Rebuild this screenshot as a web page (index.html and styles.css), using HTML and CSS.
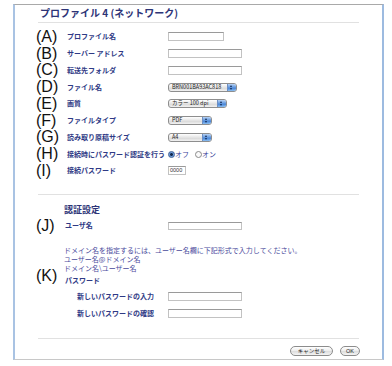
FILE: index.html
```html
<!DOCTYPE html>
<html lang="ja">
<head>
  <meta charset="UTF-8">
  <title>プロファイル 4 (ネットワーク)</title>
  <link rel="stylesheet" href="styles.css">
</head>
<body>
  <div class="frame">
    <h1 class="title">プロファイル 4 (ネットワーク)</h1>
    <div class="rule"></div>

    <div class="rows">
      <div class="row"><span class="key">(A)</span><span class="label">プロファイル名</span><span class="input w56"></span></div>
      <div class="row"><span class="key">(B)</span><span class="label">サーバー アドレス</span><span class="input w74"></span></div>
      <div class="row"><span class="key">(C)</span><span class="label">転送先フォルダ</span><span class="input w74"></span></div>
      <div class="row"><span class="key">(D)</span><span class="label">ファイル名</span>
        <span class="select w69"><span class="select-text">BRN001BA93AC818</span><span class="arrows"></span></span></div>
      <div class="row"><span class="key">(E)</span><span class="label">画質</span>
        <span class="select w59"><span class="select-text">カラー 100 dpi</span><span class="arrows"></span></span></div>
      <div class="row"><span class="key">(F)</span><span class="label">ファイルタイプ</span>
        <span class="select w44"><span class="select-text">PDF</span><span class="arrows"></span></span></div>
      <div class="row"><span class="key">(G)</span><span class="label">読み取り原稿サイズ</span>
        <span class="select w44"><span class="select-text">A4</span><span class="arrows"></span></span></div>
      <div class="row"><span class="key">(H)</span><span class="label">接続時にパスワード認証を行う</span>
        <span class="radios">
          <span class="radio on"></span><span class="radio-text">オフ</span>
          <span class="radio"></span><span class="radio-text">オン</span>
        </span></div>
      <div class="row"><span class="key">(I)</span><span class="label">接続パスワード</span><span class="input w18 small">0000</span></div>
    </div>

    <div class="rule rule-mid"></div>

    <h2 class="subhead">認証設定</h2>
    <div class="row row-j"><span class="key">(J)</span><span class="label">ユーザ名</span><span class="input w74"></span></div>

    <div class="note-block">
      <span class="key key-k">(K)</span>
      <div>
        <p class="note">ドメイン名を指定するには、ユーザー名欄に下記形式で入力してください。</p>
        <p class="note">ユーザー名@ドメイン名</p>
        <p class="note">ドメイン名\ユーザー名</p>
        <div class="label pw-head">パスワード</div>
      </div>
    </div>

    <div class="row row-pw"><span></span><span class="label">新しいパスワードの入力</span><span class="input w74"></span></div>
    <div class="row row-pw"><span></span><span class="label">新しいパスワードの確認</span><span class="input w74"></span></div>

    <div class="rule rule-bottom"></div>

    <div class="buttons">
      <span class="btn btn-cancel">キャンセル</span>
      <span class="btn btn-ok">OK</span>
    </div>
  </div>
</body>
</html>
```

FILE: styles.css
```css
body {
  margin: 0;
  background-color: #fff;
  font-family: "Noto Sans CJK JP", "Liberation Sans", sans-serif;
}

.frame {
  box-sizing: border-box;
  width: 371px;
  height: 356px;
  margin: 4px 0 0 13px;
  border-top: 1px solid #a9a9a9;
  border-left: 2px solid #a9c3e3;
  border-right: 2px solid #9dbbe0;
  border-bottom: 1px solid #c8c8c8;
  padding: 0 21px;
  display: flex;
  flex-direction: column;
}

.title {
  margin: 1px 0 0 4px;
  font-size: 10px;
  line-height: 13px;
  font-weight: bold;
  color: #2d3477;
}

.rule {
  height: 1px;
  background-color: #e1e1e1;
  margin: 3px 2px 0 2px;
  flex-shrink: 0;
}
.rule-mid { margin-top: 14.6px; }
.rule-bottom { margin-top: 15.5px; }

.rows {
  padding-top: 5.6px;
}

.row {
  display: grid;
  grid-template-columns: 31px 101px auto;
  align-items: center;
  height: 16.75px;
}

.key {
  font-family: "Liberation Sans", Arial, sans-serif;
  font-size: 16px;
  line-height: 16px;
  color: #111;
}

.label {
  font-size: 7px;
  line-height: 9px;
  font-weight: bold;
  color: #2f3a85;
  white-space: nowrap;
}

/* text boxes */
.input {
  box-sizing: border-box;
  display: block;
  height: 9px;
  border: 1px solid #c2c2c2;
  border-top-color: #9a9a9a;
  background-color: #fff;
}
.w18 { width: 18px; }
.w44 { width: 44px; }
.w56 { width: 56px; }
.w59 { width: 59px; }
.w69 { width: 69px; }
.w74 { width: 74px; }

.small {
  font-family: "Liberation Sans", sans-serif;
  font-size: 5.5px;
  line-height: 7px;
  color: #333;
  padding-left: 1px;
}

/* aqua style pop-up */
.select {
  box-sizing: border-box;
  display: flex;
  height: 9px;
  border: 1px solid #8e8e8e;
  border-radius: 3px;
  overflow: hidden;
  background: linear-gradient(#ffffff, #e4e4e4 50%, #d4d4d4 51%, #f2f2f2);
}
.select-text {
  flex: 1;
  font-size: 5.5px;
  line-height: 7px;
  padding-left: 3px;
  color: #222;
  white-space: nowrap;
}
.arrows {
  width: 8px;
  border-left: 1px solid #6d8fc4;
  background: linear-gradient(#b8d3f5, #5f95dc 50%, #3b78d1 51%, #8cc0f2);
  position: relative;
}
.arrows::before,
.arrows::after {
  content: "";
  position: absolute;
  left: 2px;
  border-left: 1.5px solid transparent;
  border-right: 1.5px solid transparent;
}
.arrows::before {
  top: 1px;
  border-bottom: 2px solid #102a55;
}
.arrows::after {
  bottom: 1px;
  border-top: 2px solid #102a55;
}

/* radio buttons */
.radios {
  display: flex;
  align-items: center;
}
.radio {
  box-sizing: border-box;
  width: 7px;
  height: 7px;
  border-radius: 50%;
  border: 1px solid #8a8a8a;
  background: #fafafa;
}
.radio.on {
  border-color: #3d5f94;
  background: radial-gradient(circle, #14284a 1.2px, #5d8fd6 1.6px, #9dc2ef);
}
.radio-text {
  font-size: 7px;
  line-height: 9px;
  color: #3a3f9a;
  margin: 0 6px 0 0;
}

/* authentication */
.subhead {
  margin: 9.5px 0 0 28px;
  font-size: 9px;
  line-height: 11px;
  font-weight: bold;
  color: #2d3477;
}

.row-j {
  margin-top: 2.1px;
  grid-template-columns: 29px 103px auto;
}
.row-j .input { height: 8px; }

.note-block {
  display: grid;
  grid-template-columns: 28px auto;
  margin-top: 12px;
}
.key-k {
  align-self: end;
  margin-bottom: 1px;
}

.note {
  margin: 0;
  font-size: 7px;
  line-height: 8.7px;
  color: #4a4a9c;
  white-space: nowrap;
}
.pw-head {
  margin: 4px 0 0 1px;
}

.row-pw {
  grid-template-columns: 41px 91px auto;
  height: 17px;
}
.row-pw:first-of-type { margin-top: 3px; }
.note-block + .row-pw { margin-top: 3px; }

.buttons {
  display: flex;
  justify-content: flex-end;
  gap: 7px;
  margin: 7px 1px 0 0;
}
.btn {
  box-sizing: border-box;
  height: 10px;
  border: 1px solid #8c8c8c;
  border-radius: 5px;
  background: linear-gradient(#ffffff, #ececec 50%, #dcdcdc 51%, #f4f4f4);
  font-size: 5.5px;
  line-height: 8px;
  color: #222;
  text-align: center;
}
.btn-cancel { width: 43px; }
.btn-ok {
  width: 20px;
  font-family: "Liberation Sans", sans-serif;
}
```
